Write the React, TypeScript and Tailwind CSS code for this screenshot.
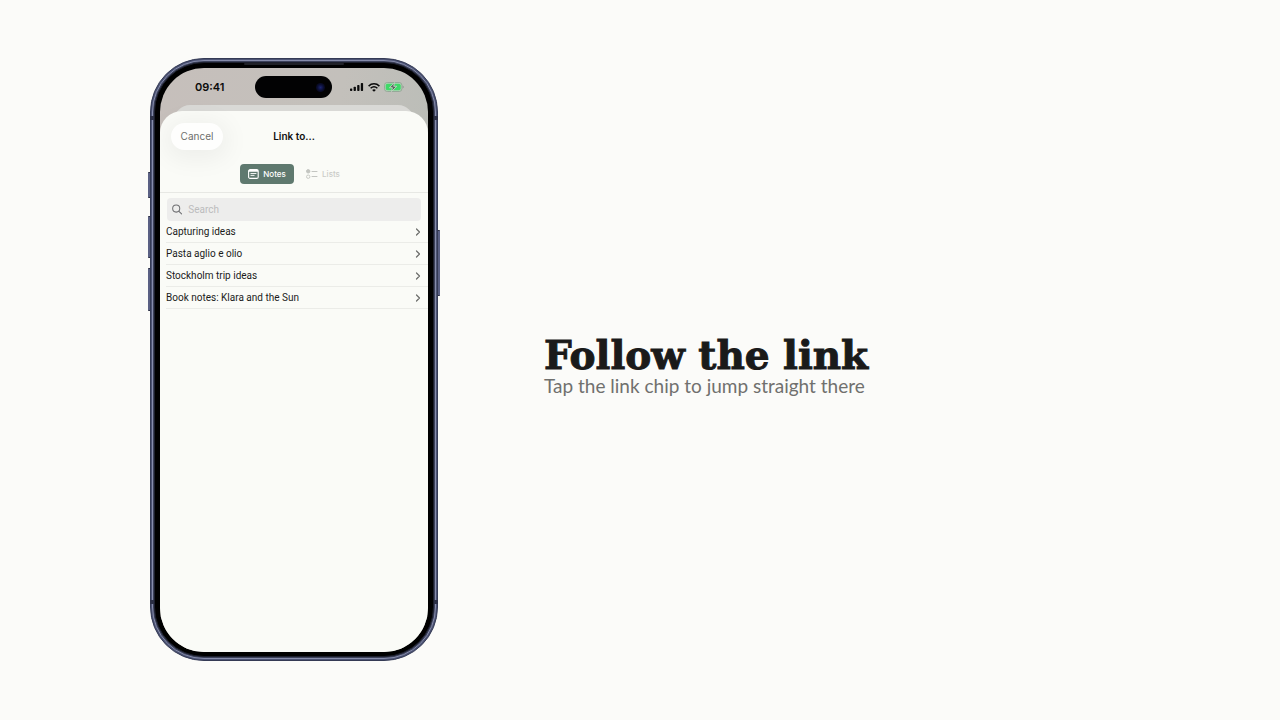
import { ChevronRight } from "lucide-react";

const notes = [
    "Capturing ideas",
    "Pasta aglio e olio",
    "Stockholm trip ideas",
    "Book notes: Klara and the Sun",
];

function SignalIcon() {
    return (
        <svg width="14" height="8" viewBox="0 0 14 8" fill="#0b0b0b" aria-hidden="true">
            <rect x="0" y="5.4" width="2.3" height="2.6" rx="0.7" />
            <rect x="3.6" y="3.8" width="2.3" height="4.2" rx="0.7" />
            <rect x="7.2" y="2" width="2.3" height="6" rx="0.7" />
            <rect x="10.8" y="0" width="2.3" height="8" rx="0.7" />
        </svg>
    );
}

function WifiIcon() {
    return (
        <svg width="12" height="9" viewBox="0 0 12 9" fill="none" stroke="#0b0b0b" strokeWidth="1.5" aria-hidden="true">
            <path d="M0.6 3.1C3.7 0.1 8.3 0.1 11.4 3.1" />
            <path d="M2.6 5.3C4.6 3.4 7.4 3.4 9.4 5.3" />
            <path d="M6 8.8L4.1 6.9Q6 5.4 7.9 6.9Z" fill="#0b0b0b" stroke="none" />
        </svg>
    );
}

function BatteryIcon() {
    return (
        <svg width="20" height="10" viewBox="0 0 20 10" aria-hidden="true">
            <rect x="0.5" y="0.5" width="17.4" height="9" rx="2.8" fill="#b5d3b8" stroke="#8d9f90" strokeWidth="0.8" />
            <rect x="1.7" y="1.7" width="15" height="6.6" rx="1.8" fill="#3fd968" />
            <path d="M18.8 3.4Q20.2 5 18.8 6.6Z" fill="#6f7d72" />
            <path d="M10.6 0.6L5.4 5.7H8.4L7.5 9.5L12.8 4.3H9.7Z" fill="#59635c" stroke="#c3d6c5" strokeWidth="0.9" />
        </svg>
    );
}

function NotesIcon() {
    return (
        <svg width="11" height="10" viewBox="0 0 11 10" fill="none" stroke="#fff" aria-hidden="true">
            <rect x="0.6" y="0.6" width="9.6" height="8.8" rx="1.5" strokeWidth="1.1" />
            <path d="M0.8 1.8H10" strokeWidth="1.8" />
            <path d="M2.5 4.5H8.4M2.5 6.4H6.5" strokeWidth="0.9" />
        </svg>
    );
}

function ListsIcon() {
    return (
        <svg width="12" height="10" viewBox="0 0 12 10" fill="none" stroke="#c3c5c1" aria-hidden="true">
            <circle cx="2.2" cy="2.3" r="1.7" fill="#c3c5c1" />
            <circle cx="2.2" cy="7.7" r="1.7" strokeWidth="0.9" />
            <path d="M5.6 2.5H11.4M5.6 7.5H11.4" strokeWidth="1" />
        </svg>
    );
}

function SearchIcon() {
    return (
        <svg width="11" height="11" viewBox="0 0 11 11" fill="none" stroke="#6f7073" strokeWidth="1.1" strokeLinecap="round" aria-hidden="true">
            <circle cx="4.5" cy="4.5" r="3.8" />
            <path d="M7.4 7.4L10.3 10.3" />
        </svg>
    );
}

function StatusBar() {
    return (
        <div className="flex h-[37px] items-center pt-px">
            <span className="w-[95px] pl-[35px] text-[11px] leading-none font-semibold text-[#0b0b0b]">09:41</span>
            <div className="flex h-[22px] w-[77px] items-center justify-end rounded-full bg-[#020203] pr-[7px]">
                <span className="size-[9px] rounded-full bg-[radial-gradient(circle,#1c2470_0%,#0a0d30_50%,#030308_100%)]" />
            </div>
            <div className="ml-[18px] flex items-center gap-[4px]">
                <SignalIcon />
                <WifiIcon />
                <BatteryIcon />
            </div>
        </div>
    );
}

function LinkSheet() {
    return (
        <section className="flex flex-1 flex-col rounded-t-[22px] bg-[#fafbf7]">
            <header className="grid h-[51px] grid-cols-[1fr_auto_1fr] items-center px-[11px]">
                <button className="h-[27px] w-[52px] rounded-full bg-[#fefefd] text-[10px] text-[#6d6e6c] shadow-[0_4px_24px_6px_rgba(0,0,0,0.05)]">
                    Cancel
                </button>
                <h1 className="text-[10px] font-semibold text-[#0f0f0f]">Link to...</h1>
            </header>

            <div className="flex h-[31px] justify-center gap-[12px] border-b border-[#e7e8e4] pt-[2px] pr-[8px]">
                <button className="flex h-[20px] w-[54px] items-center justify-center gap-[4px] rounded-[4px] bg-[#5f796f] text-[8px] font-medium text-white">
                    <NotesIcon />
                    Notes
                </button>
                <button className="flex h-[20px] items-center gap-[4px] text-[8px] font-medium text-[#cbccc8]">
                    <ListsIcon />
                    Lists
                </button>
            </div>

            <label className="mx-[7px] mt-[5px] flex h-[23px] items-center gap-[6px] rounded-[4px] bg-[#ededec] px-[5px]">
                <SearchIcon />
                <input
                    type="search"
                    placeholder="Search"
                    aria-label="Search"
                    className="w-full bg-transparent font-[Roboto,sans-serif] text-[10px] outline-none placeholder:text-[#bcbcbd]"
                />
            </label>

            <ul className="pl-[6px]">
                {notes.map((note) => (
                    <li key={note} className="border-b border-[#ebece8]">
                        <button className="flex h-[21px] w-full items-center justify-between pr-[4px] font-[Roboto,sans-serif] text-[10px] text-[#1b1b1b]">
                            {note}
                            <ChevronRight size={12} color="#6a6b69" strokeWidth={2.4} />
                        </button>
                    </li>
                ))}
            </ul>
        </section>
    );
}

function Phone() {
    return (
        <div className="relative w-[288px] shrink-0 font-[Inter,sans-serif]">
            <span className="absolute top-[114px] -left-[2px] h-[26px] w-[4px] rounded-l-[1px] border-y border-[#2b2f45] bg-[#5a6084]" />
            <span className="absolute top-[158px] -left-[2px] h-[42px] w-[4px] rounded-l-[1px] border-y border-[#2b2f45] bg-[#5a6084]" />
            <span className="absolute top-[210px] -left-[2px] h-[43px] w-[4px] rounded-l-[1px] border-y border-[#2b2f45] bg-[#5a6084]" />
            <span className="absolute top-[172px] -right-[2px] h-[66px] w-[4px] rounded-r-[1px] border-y border-[#2b2f45] bg-[#5a6084]" />

            <div className="relative rounded-[54px] border border-[#343a55] bg-[#4c5374] p-px">
                <div className="rounded-[52px] border border-[#868cab] bg-[#3c415a] p-px">
                    <div className="rounded-[50px] border border-[#1c1f2c] bg-black px-[5px] pt-[5px] pb-[4px]">
                        <div className="flex min-h-[584px] flex-col overflow-hidden rounded-[44px] bg-[linear-gradient(100deg,#c6bfbb_0%,#c3c0bb_50%,#b4bbb5_100%)]">
                            <StatusBar />
                            <div className="mx-[14px] -mb-[14px] h-[20px] rounded-t-[16px] bg-[#d9d9d6]" />
                            <LinkSheet />
                        </div>
                    </div>
                </div>
            </div>

            <span className="absolute top-[58px] left-0 h-[4px] w-[4px] bg-[#2b2f45]" />
            <span className="absolute top-[58px] right-0 h-[4px] w-[4px] bg-[#2b2f45]" />
            <span className="absolute bottom-[57px] left-0 h-[4px] w-[4px] bg-[#2b2f45]" />
            <span className="absolute right-0 bottom-[57px] h-[4px] w-[4px] bg-[#2b2f45]" />
            <span className="absolute top-[5px] left-[94px] h-[2px] w-[100px] rounded-full bg-[#202127]" />
        </div>
    );
}

export default function App() {
    return (
        <main className="flex min-h-screen items-center gap-[106px] bg-[#fbfbf9] pb-px pl-[150px]">
            <Phone />
            <div className="pt-[12px]">
                <h2 className="font-['DejaVu_Serif',serif] text-[39px] leading-[40px] font-bold text-[#1a1a1a] [-webkit-text-stroke:1px_#1a1a1a]">
                    Follow the link
                </h2>
                <p className="font-[Lato,sans-serif] text-[19px] leading-[22px] text-[#70706e]">
                    Tap the link chip to jump straight there
                </p>
            </div>
        </main>
    );
}
